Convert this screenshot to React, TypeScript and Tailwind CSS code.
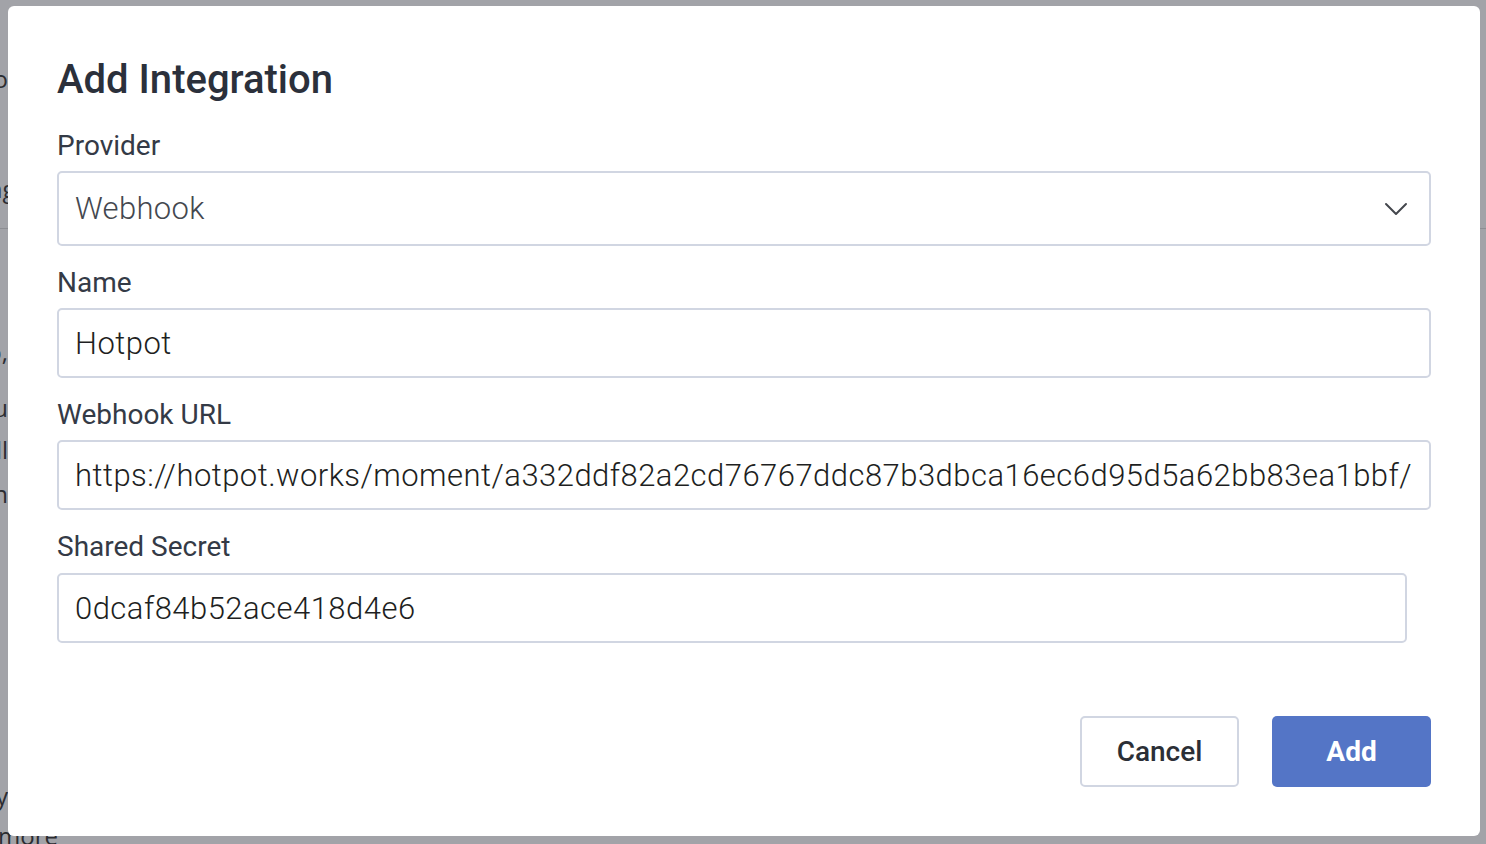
import React from "react";

const font = { fontFamily: "Roboto, 'Noto Sans', 'Liberation Sans', sans-serif" };

function Label({ children }: { children: React.ReactNode }) {
  return <label className="h-[36px] text-[28px] leading-[36px] text-[#343a46]">{children}</label>;
}

function Field({ label, value, gapTop }: { label: string; value: string; gapTop: string }) {
  return (
    <div className={`flex flex-col ${gapTop}`}>
      <Label>{label}</Label>
      <div className="mt-[7px] flex h-[70px] w-full items-center rounded-[5px] border-2 border-[#d1d6e2] bg-white pl-[16px] pr-[16px]">
        <span className="whitespace-nowrap text-[31px] font-light leading-none tracking-[0.47px] text-[#1e1f22]">
          {value}
        </span>
      </div>
    </div>
  );
}

export default function App() {
  return (
    <div className="relative h-[844px] w-[1486px] overflow-hidden bg-white" style={font}>
      {/* Background page */}
      <div
        className="flex flex-col text-[24px] leading-[30px] text-[#3a3a3a]"
        style={{ fontFamily: "'Open Sans', sans-serif" }}
      >
        <div className="h-[229px] border-b border-[#dcdcdc]">
          <div className="-ml-[52px] mt-[64px] w-[60px] overflow-hidden text-right whitespace-nowrap">Info</div>
          <div className="-ml-[52px] mt-[80px] w-[60px] overflow-hidden text-right whitespace-nowrap">Billing</div>
        </div>
        <div className="-ml-[52px] mt-[108px] w-[60px] overflow-hidden text-right whitespace-nowrap">to,</div>
        <div className="-ml-[52px] mt-[26px] w-[60px] overflow-hidden text-right whitespace-nowrap">you</div>
        <div className="-ml-[52px] mt-[12px] w-[60px] overflow-hidden text-right whitespace-nowrap">will</div>
        <div className="-ml-[52px] mt-[14px] w-[60px] overflow-hidden text-right whitespace-nowrap">then</div>
        <div className="-ml-[52px] mt-[272px] w-[60px] overflow-hidden text-right whitespace-nowrap">any</div>
        <div className="-ml-[2px] mt-[10px] whitespace-nowrap">more</div>
      </div>

      {/* Overlay */}
      <div className="absolute inset-0 bg-[rgba(22,26,38,0.4)] pl-[8px] pt-[6px]">
        <div className="flex h-[830px] w-[1472px] flex-col rounded-[6px] bg-white px-[49px] pt-[50px]">
          <h1 className="h-[48px] text-[40px] font-medium leading-[48px] text-[#2b303b]">Add Integration</h1>

          <div className="mt-[24px] flex flex-col">
            <Label>Provider</Label>
            <div className="mt-[7px] flex h-[75px] w-full items-center justify-between rounded-[5px] border-2 border-[#d1d6e2] bg-white pl-[16px] pr-[21px]">
              <span className="text-[31px] font-light leading-none tracking-[0.3px] text-[#44484f]">Webhook</span>
              <svg width="24" height="14" viewBox="0 0 24 14" fill="none">
                <polyline
                  points="2,2 12,12 22,2"
                  stroke="#44474d"
                  strokeWidth="2"
                  strokeLinecap="round"
                  strokeLinejoin="round"
                />
              </svg>
            </div>
          </div>

          <Field gapTop="mt-[19px]" label="Name" value="Hotpot" />
          <Field
            gapTop="mt-[19px]"
            label="Webhook URL"
            value="https://hotpot.works/moment/a332ddf82a2cd76767ddc87b3dbca16ec6d95d5a62bb83ea1bbf/"
          />
          <div className="mt-[19px] flex flex-col">
            <Label>Shared Secret</Label>
            <div className="mt-[8px] flex h-[70px] w-[calc(100%-24px)] items-center rounded-[5px] border-2 border-[#d1d6e2] bg-white pl-[16px]">
              <span className="whitespace-nowrap text-[31px] font-light leading-none tracking-[0.47px] text-[#1e1f22]">
                0dcaf84b52ace418d4e6
              </span>
            </div>
          </div>

          <div className="mt-[73px] flex justify-end gap-[33px]">
            <button className="flex h-[71px] w-[159px] items-center justify-center rounded-[5px] border-2 border-[#d1d6e2] bg-white text-[28px] font-medium text-[#2b2f36]">
              Cancel
            </button>
            <button className="flex h-[71px] w-[159px] items-center justify-center rounded-[5px] bg-[#5475c6] text-[28px] font-bold text-white">
              Add
            </button>
          </div>
        </div>
      </div>
    </div>
  );
}
